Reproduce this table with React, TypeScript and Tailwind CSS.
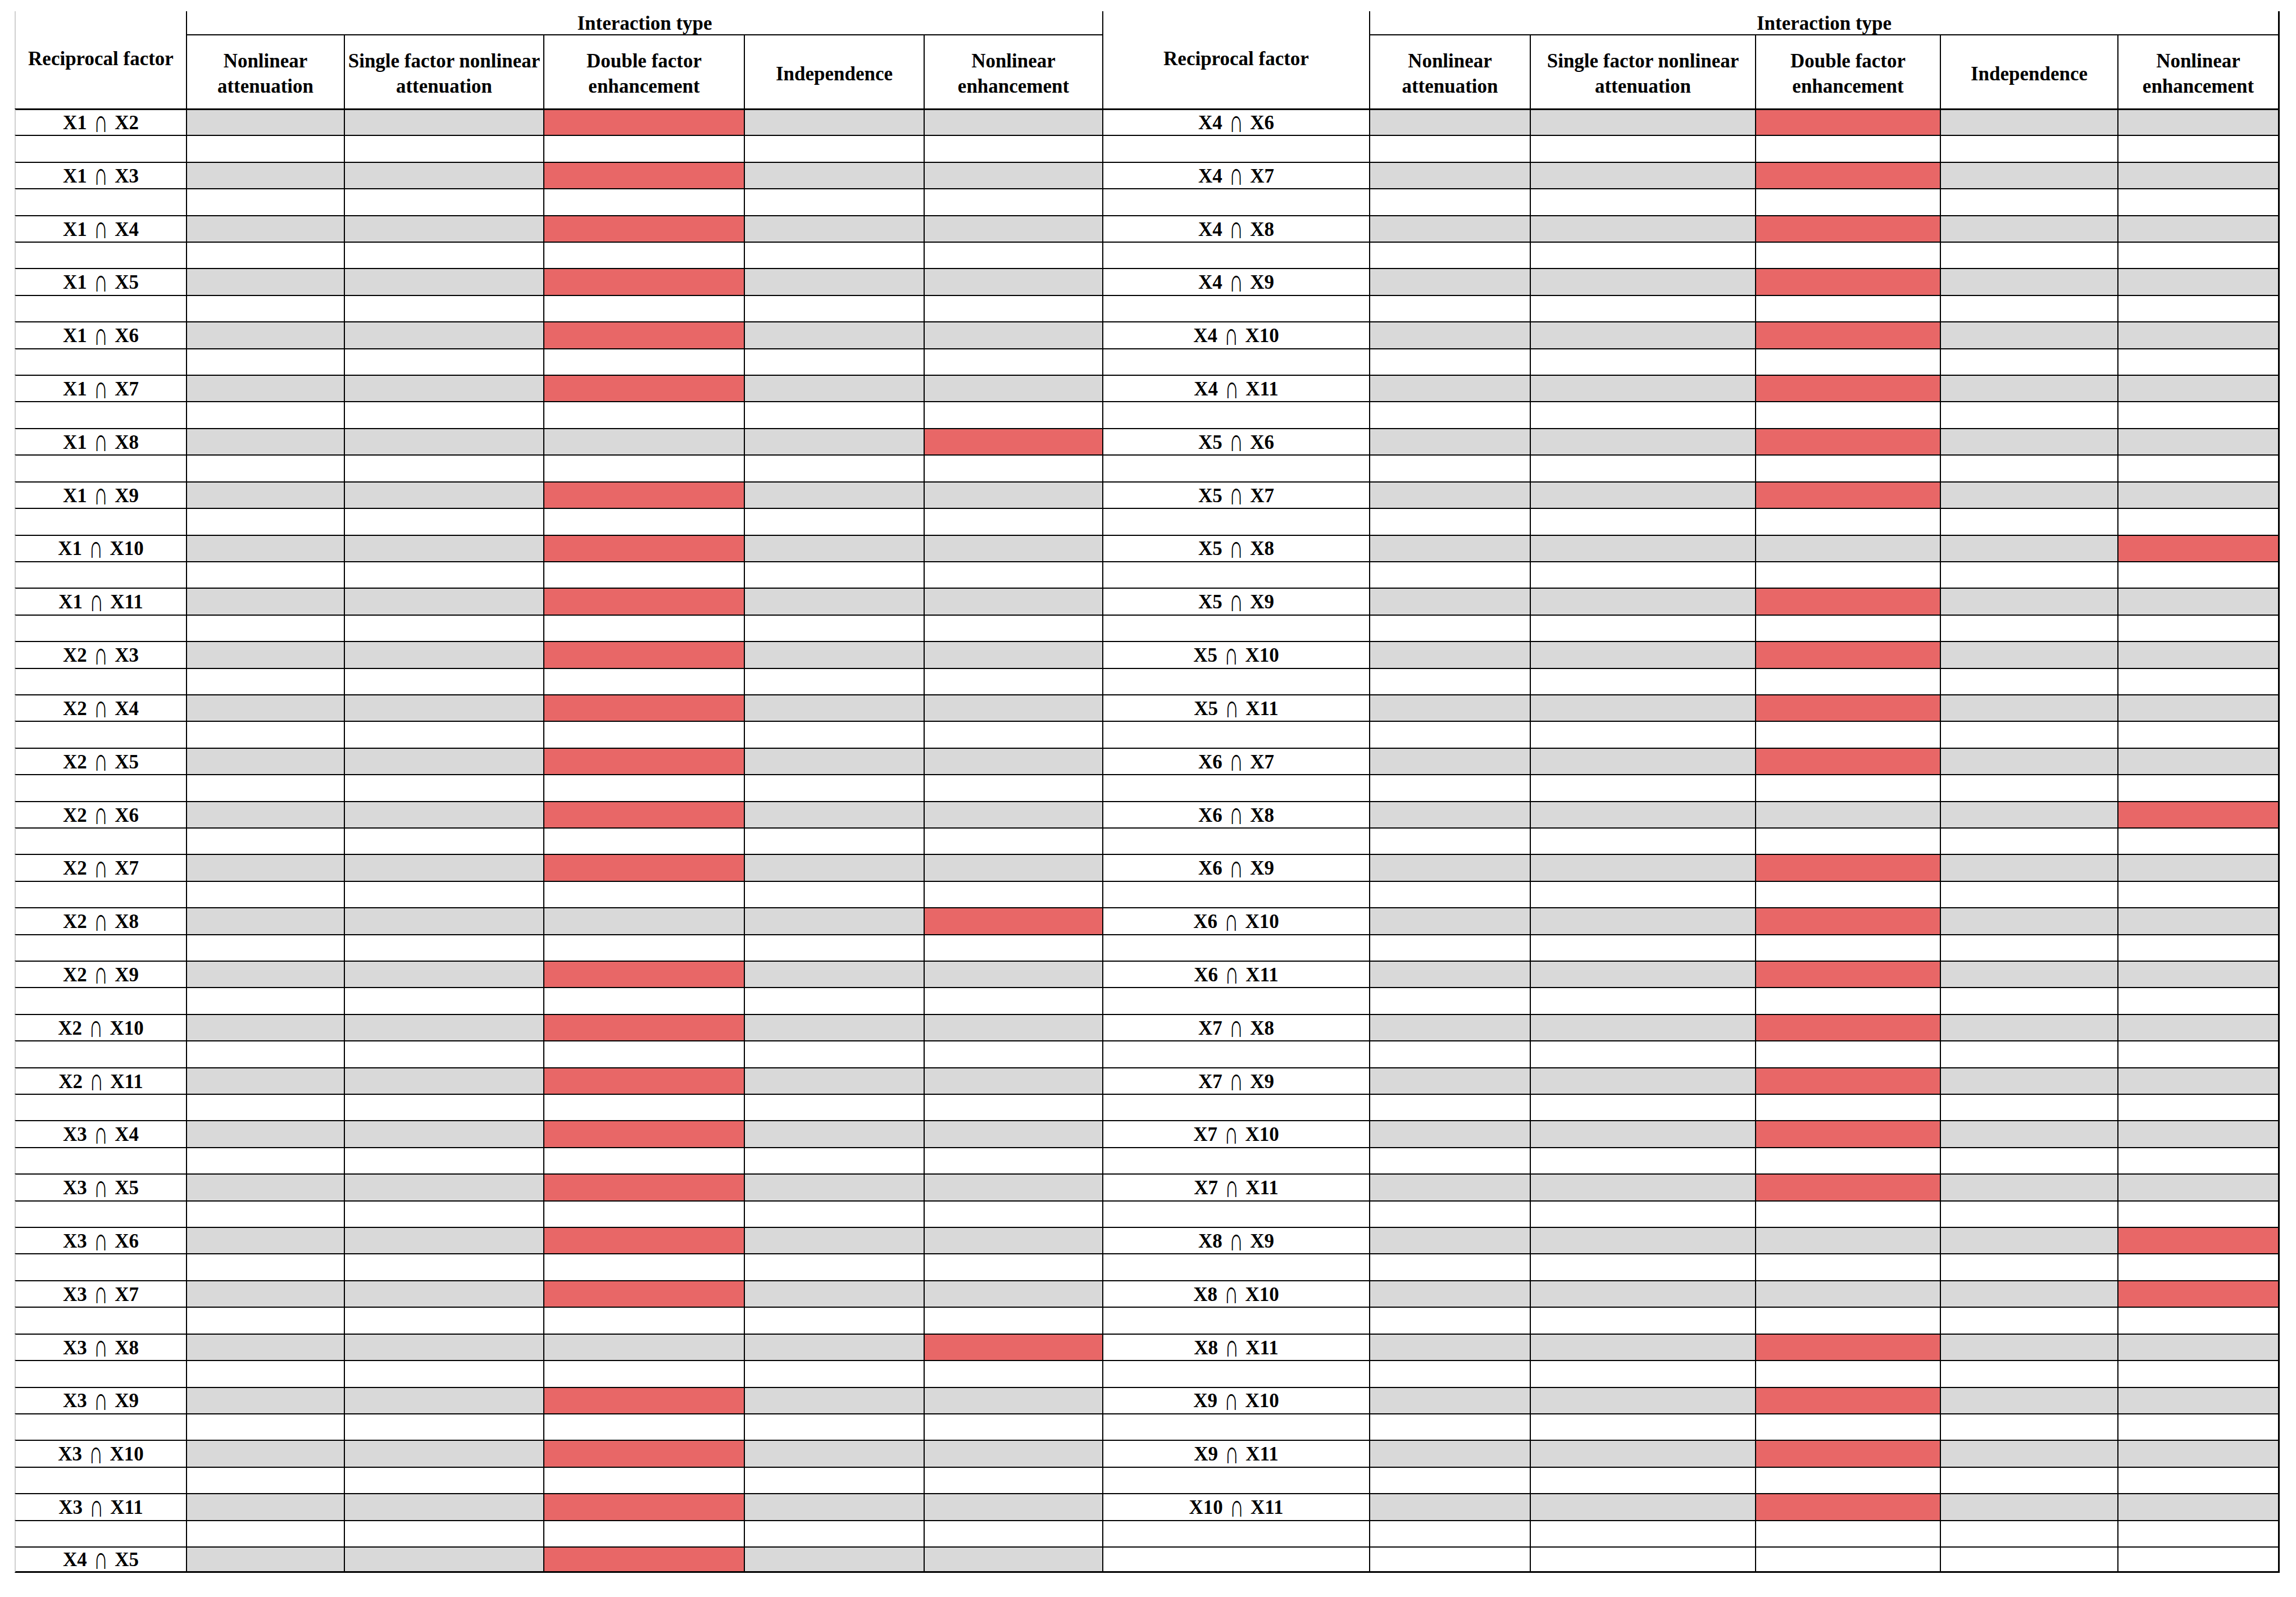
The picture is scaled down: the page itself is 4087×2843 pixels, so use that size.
import React from 'react';

// interaction type per pair: 2 = double factor enhancement, 4 = nonlinear enhancement
type Pair = { a: string; b: string; hit: number };

const toPairs = (list: [string, string, number][]): Pair[] =>
  list.map(([a, b, hit]) => ({ a, b, hit }));

const left = toPairs([
  ['X1', 'X2', 2], ['X1', 'X3', 2], ['X1', 'X4', 2], ['X1', 'X5', 2], ['X1', 'X6', 2],
  ['X1', 'X7', 2], ['X1', 'X8', 4], ['X1', 'X9', 2], ['X1', 'X10', 2], ['X1', 'X11', 2],
  ['X2', 'X3', 2], ['X2', 'X4', 2], ['X2', 'X5', 2], ['X2', 'X6', 2], ['X2', 'X7', 2],
  ['X2', 'X8', 4], ['X2', 'X9', 2], ['X2', 'X10', 2], ['X2', 'X11', 2],
  ['X3', 'X4', 2], ['X3', 'X5', 2], ['X3', 'X6', 2], ['X3', 'X7', 2], ['X3', 'X8', 4],
  ['X3', 'X9', 2], ['X3', 'X10', 2], ['X3', 'X11', 2], ['X4', 'X5', 2],
]);

const right = toPairs([
  ['X4', 'X6', 2], ['X4', 'X7', 2], ['X4', 'X8', 2], ['X4', 'X9', 2], ['X4', 'X10', 2],
  ['X4', 'X11', 2], ['X5', 'X6', 2], ['X5', 'X7', 2], ['X5', 'X8', 4], ['X5', 'X9', 2],
  ['X5', 'X10', 2], ['X5', 'X11', 2], ['X6', 'X7', 2], ['X6', 'X8', 4], ['X6', 'X9', 2],
  ['X6', 'X10', 2], ['X6', 'X11', 2], ['X7', 'X8', 2], ['X7', 'X9', 2], ['X7', 'X10', 2],
  ['X7', 'X11', 2], ['X8', 'X9', 4], ['X8', 'X10', 4], ['X8', 'X11', 2], ['X9', 'X10', 2],
  ['X9', 'X11', 2], ['X10', 'X11', 2],
]);

const ROWS = 55;

const types = [
  ['Nonlinear', 'attenuation'],
  ['Single factor nonlinear', 'attenuation'],
  ['Double factor', 'enhancement'],
  ['Independence'],
  ['Nonlinear', 'enhancement'],
];

function Label({ p }: { p: Pair }) {
  return (
    <span className="flex items-end">
      {p.a}
      <span className="inline-block mx-[12px] font-normal scale-y-[1.6] origin-bottom leading-none translate-y-[-1px]">∩</span>
      {p.b}
    </span>
  );
}

// one half of a body row: label cell + five type cells
function halfRow(pair: Pair | undefined, row: number, side: 'l' | 'r') {
  const isData = row % 2 === 0 && pair;
  const top = row === 0 ? 'border-t-[3px]' : 'border-t-2';
  const bottom = row === ROWS - 1 ? 'border-b-[3px]' : '';
  const edge = side === 'l' ? 'border-l-[#cfcfcf]' : 'border-l-black';
  const cells = [
    <div
      key={`${side}-${row}-lab`}
      className={`flex items-center justify-center whitespace-nowrap bg-white pt-[3px] border-l-2 ${edge} border-t-black border-b-black ${top} ${bottom}`}
    >
      {isData ? <Label p={pair!} /> : null}
    </div>,
  ];
  for (let c = 0; c < 5; c++) {
    let fill = 'bg-white';
    if (isData) fill = pair!.hit === c ? 'bg-[#e86767]' : 'bg-[#d9d9d9]';
    const last = side === 'r' && c === 4 ? 'border-r-[3px] border-r-black' : '';
    cells.push(
      <div
        key={`${side}-${row}-${c}`}
        className={`${fill} border-l-2 border-l-black border-t-black border-b-black ${top} ${bottom} ${last}`}
      />
    );
  }
  return cells;
}

function TypeHeads({ side }: { side: 'l' | 'r' }) {
  return (
    <>
      {types.map((t, i) => (
        <div
          key={`${side}-h-${i}`}
          className={`flex flex-col items-center justify-center whitespace-nowrap leading-[45px] pt-[6px] border-l-2 border-l-black ${
            side === 'r' && i === 4 ? 'border-r-[3px] border-r-black' : ''
          }`}
        >
          {t.map((line) => (
            <span key={line}>{line}</span>
          ))}
        </div>
      ))}
    </>
  );
}

export default function App() {
  const body: React.ReactNode[] = [];
  for (let r = 0; r < ROWS; r++) {
    const idx = r / 2;
    body.push(...halfRow(left[idx], r, 'l'));
    body.push(...halfRow(right[idx], r, 'r'));
  }

  return (
    <div className="w-[4087px] h-[2843px] bg-white pt-[20px] pl-[26px] font-['Liberation_Serif',serif] font-bold text-[35px] text-black">
      <div className="grid w-[4032px] grid-cols-[305px_281px_355px_357px_320px_318px_475px_286px_401px_329px_316px_289px] grid-rows-[43px_130px_repeat(55,47.42px)]">
        {/* header */}
        <div className="row-span-2 flex items-center justify-center border-l-2 border-l-[#cfcfcf] pb-[2px]">
          Reciprocal factor
        </div>
        <div className="col-span-5 flex items-center justify-center pt-[3px] border-l-2 border-l-black border-b-2 border-b-black">
          Interaction type
        </div>
        <div className="row-span-2 flex items-center justify-center border-l-2 border-l-black pb-[2px]">
          Reciprocal factor
        </div>
        <div className="col-span-5 flex items-center justify-center pt-[3px] border-l-2 border-l-black border-r-[3px] border-r-black border-b-2 border-b-black">
          Interaction type
        </div>
        <TypeHeads side="l" />
        <TypeHeads side="r" />

        {/* body */}
        {body}
      </div>
    </div>
  );
}
